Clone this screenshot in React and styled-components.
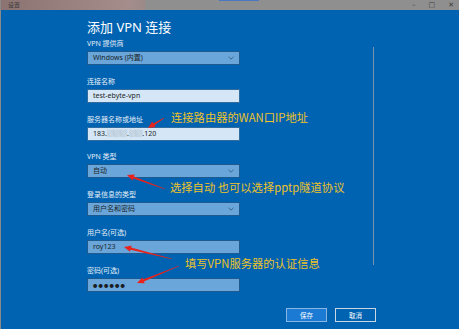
import React from "react";
import styled, { createGlobalStyle } from "styled-components";

const Global = createGlobalStyle`
  html, body { margin: 0; padding: 0; background: #0063b1; }
  body { font-family: "Noto Sans", "Noto Sans CJK SC", sans-serif; }
  * { box-sizing: border-box; }
`;

const Page = styled.div`
  position: relative;
  width: 459px;
  height: 329px;
  overflow: hidden;
  background: #0063b1;
  border-left: 1px solid #8a8a8a;
`;

const TitleBar = styled.div`
  position: relative;
  height: 10px;
  display: flex;
  align-items: center;
  background: linear-gradient(90deg, #8a7371 0%, #a48d8b 28%, #9a8a89 31.5%, #8f8f8f 31.6%, #8f8f8f 100%);
`;

const TopTab = styled.div`
  position: absolute;
  left: 218px;
  top: 0;
  width: 40px;
  height: 1px;
  background: #4a78c2;
`;

const AppName = styled.span`
  margin-left: 7px;
  font-size: 6px;
  line-height: 10px;
  color: #3a3a3a;
  font-family: "Noto Sans CJK SC", sans-serif;
`;

const WinControls = styled.div`
  margin-left: auto;
  display: flex;
  gap: 13px;
  padding-right: 5px;
  font-size: 7px;
  line-height: 10px;
  color: #3c3c3c;
  font-family: "DejaVu Sans", sans-serif;
`;

const Content = styled.div`
  height: 319px;
  display: flex;
  flex-direction: column;
`;

const MainRow = styled.div`
  display: flex;
`;

const FormColumn = styled.div`
  margin-left: 86px;
  width: 153px;
  padding-top: 9px;
  display: flex;
  flex-direction: column;
`;

const Title = styled.h1`
  margin: 0 0 4px;
  font-weight: 400;
  font-size: 13px;
  line-height: 16px;
  color: #ffffff;
  font-family: "Noto Sans", "Noto Sans CJK SC", sans-serif;
`;

const Fields = styled.div`
  display: flex;
  flex-direction: column;
  gap: 11.8px;
`;

const Field = styled.div`
  display: flex;
  flex-direction: column;
`;

const Label = styled.div`
  height: 10px;
  margin-bottom: 2px;
  font-size: 7px;
  line-height: 10px;
  color: #e6eef7;
  font-family: "Noto Sans", "Noto Sans CJK SC", sans-serif;
`;

const Box = styled.div`
  height: 14px;
  display: flex;
  align-items: center;
  padding: 0 5px;
  border: 1px solid ${(p) => (p.$light ? "#2f6c9f" : "#1d5a90")};
  background: ${(p) => (p.$light ? "#d5e7f6" : "#6aa6da")};
  font-size: 7px;
  color: #1a1f26;
  font-family: "Noto Sans", "Noto Sans CJK SC", sans-serif;
`;

const BoxText = styled.span`
  flex: 1;
  line-height: 12px;
  font-size: ${(p) => (p.$dots ? "4.3px" : "7px")};
  letter-spacing: ${(p) => (p.$dots ? "1.2px" : "0")};
`;

const Masked = styled.span`
  color: #8c9aa6;
  letter-spacing: -0.3px;
`;

const Scroll = styled.div`
  margin-left: 133px;
  margin-top: 37px;
  width: 1px;
  height: 218px;
  background: #7b91a8;
`;

const Footer = styled.div`
  margin-top: 16px;
  display: flex;
  justify-content: flex-end;
  gap: 8px;
  padding-right: 83px;
`;

const Button = styled.button`
  width: 41px;
  height: 14px;
  padding: 0;
  border: 1px solid ${(p) => (p.$primary ? "#8ab6e4" : "#c9d6e3")};
  background: ${(p) => (p.$primary ? "#1b7ad4" : "#0063b1")};
  color: #ffffff;
  font-size: 6.5px;
  font-family: "Noto Sans CJK SC", sans-serif;
`;

const Note = styled.div`
  position: absolute;
  left: ${(p) => p.$x}px;
  top: ${(p) => p.$y}px;
  font-size: 11.3px;
  line-height: 16px;
  white-space: nowrap;
  color: #eec22a;
  font-family: "Noto Sans CJK SC", sans-serif;
`;

const Overlay = styled.svg`
  position: absolute;
  left: 0;
  top: 0;
  pointer-events: none;
`;

const Chevron = () => (
  <svg width="6" height="4" viewBox="0 0 6 4">
    <path d="M0.5 0.8 L3 3.2 L5.5 0.8" fill="none" stroke="#2f5578" strokeWidth="0.8" />
  </svg>
);

function arrowPoints(tx, ty, hx, hy) {
  const dx = hx - tx;
  const dy = hy - ty;
  const len = Math.hypot(dx, dy);
  const ux = dx / len;
  const uy = dy / len;
  const nx = -uy;
  const ny = ux;
  const headLen = 7;
  const headW = 3.2;
  const shaftW = 1.1;
  const bx = hx - ux * headLen;
  const by = hy - uy * headLen;
  const pts = [
    [tx + nx * 0.3, ty + ny * 0.3],
    [bx + nx * shaftW, by + ny * shaftW],
    [bx + nx * headW, by + ny * headW],
    [hx, hy],
    [bx - nx * headW, by - ny * headW],
    [bx - nx * shaftW, by - ny * shaftW],
    [tx - nx * 0.3, ty - ny * 0.3],
  ];
  return pts.map((p) => p.map((v) => v.toFixed(1)).join(",")).join(" ");
}

const arrows = [
  [163, 118, 147, 128],
  [164, 189, 126, 175],
  [171, 259, 123, 247],
  [178, 266, 136, 283],
];

const fields = [
  { label: "VPN 提供商", value: "Windows (内置)", select: true },
  { label: "连接名称", value: "test-ebyte-vpn", light: true },
  {
    label: "服务器名称或地址",
    value: (
      <>
        183.<Masked>▒▒▒</Masked>.<Masked>▒▒</Masked>.120
      </>
    ),
    light: true,
  },
  { label: "VPN 类型", value: "自动", select: true },
  { label: "登录信息的类型", value: "用户名和密码", select: true },
  { label: "用户名(可选)", value: "roy123" },
  { label: "密码(可选)", value: "●●●●●●", dots: true },
];

export default function App() {
  return (
    <>
      <Global />
      <Page>
        <TitleBar>
          <TopTab />
          <AppName>设置</AppName>
          <WinControls>
            <span>–</span>
            <span>□</span>
            <span>✕</span>
          </WinControls>
        </TitleBar>
        <Content>
          <MainRow>
            <FormColumn>
              <Title>添加 VPN 连接</Title>
              <Fields>
                {fields.map((f) => (
                  <Field key={f.label}>
                    <Label>{f.label}</Label>
                    <Box $light={f.light}>
                      <BoxText $dots={f.dots}>{f.value}</BoxText>
                      {f.select && <Chevron />}
                    </Box>
                  </Field>
                ))}
              </Fields>
            </FormColumn>
            <Scroll />
          </MainRow>
          <Footer>
            <Button $primary>保存</Button>
            <Button>取消</Button>
          </Footer>
        </Content>
        <Note $x={170} $y={109}>连接路由器的WAN口IP地址</Note>
        <Note $x={169} $y={179}>选择自动 也可以选择pptp隧道协议</Note>
        <Note $x={184} $y={255}>填写VPN服务器的认证信息</Note>
        <Overlay width="459" height="329" viewBox="0 0 459 329">
          {arrows.map((a, i) => (
            <polygon key={i} points={arrowPoints(...a)} fill="#e8231d" />
          ))}
        </Overlay>
      </Page>
    </>
  );
}
